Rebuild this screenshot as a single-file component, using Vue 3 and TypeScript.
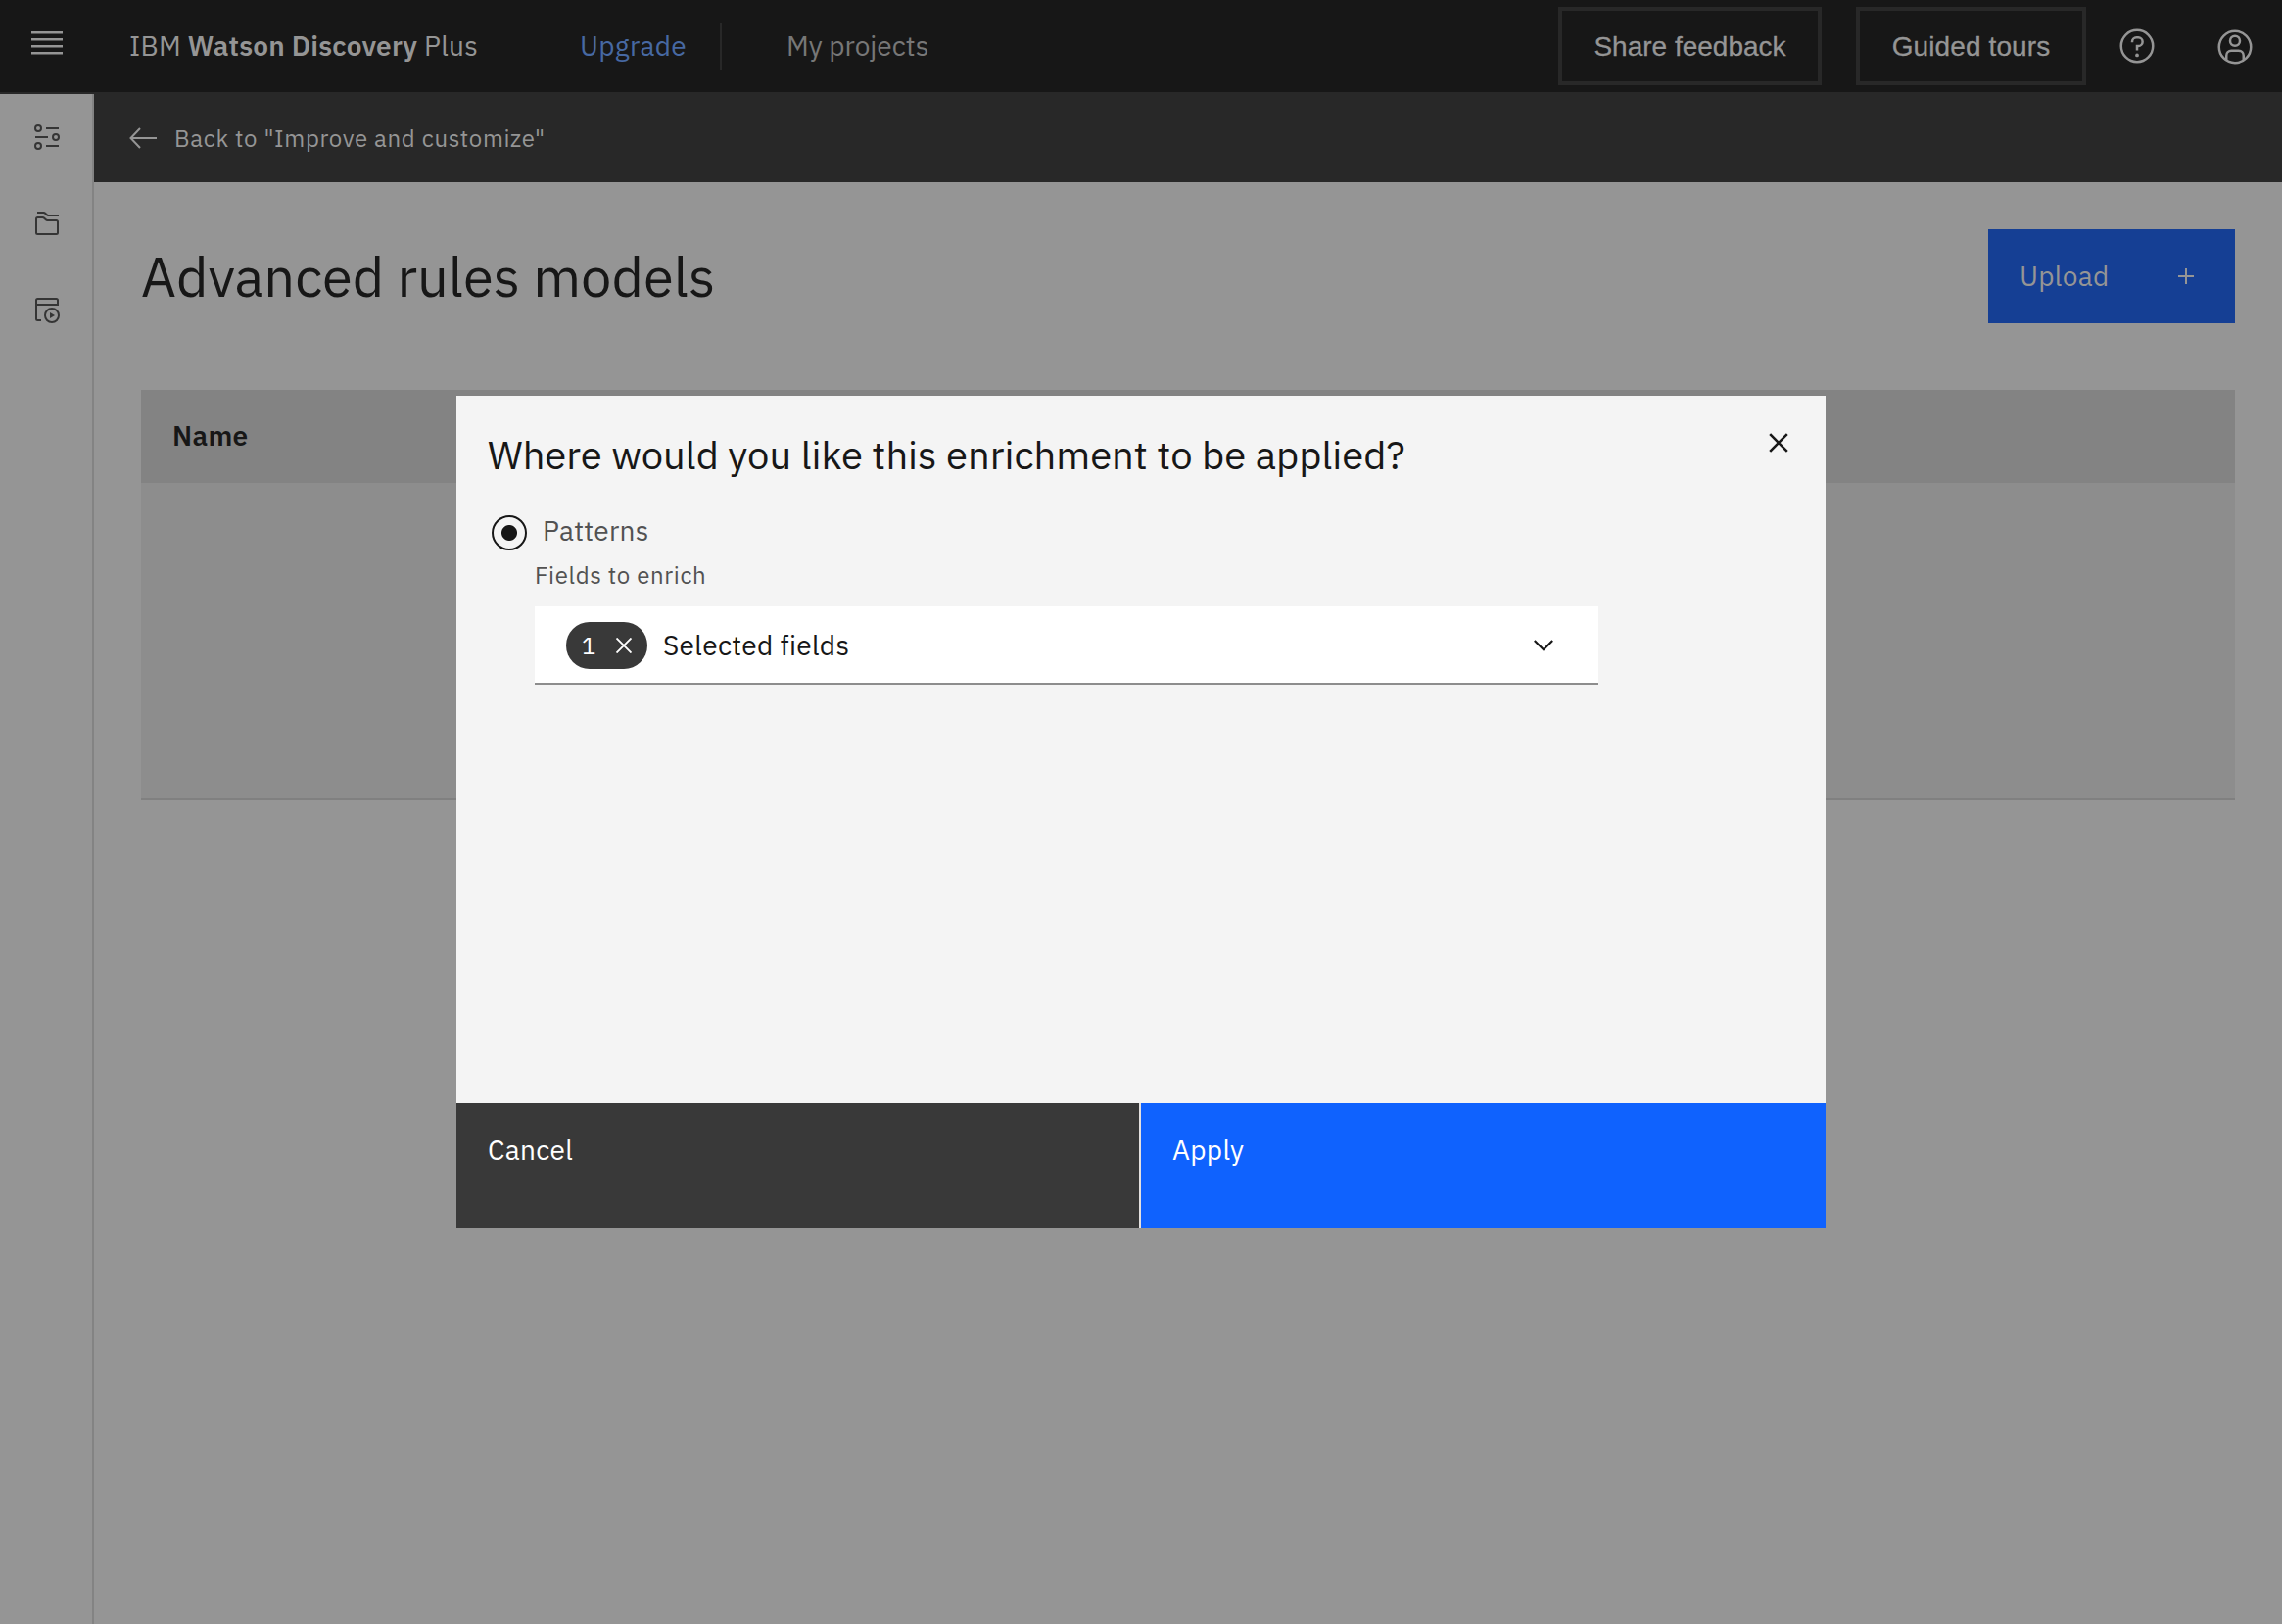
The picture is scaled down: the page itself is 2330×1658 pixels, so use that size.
<script setup lang="ts">
import { ref } from 'vue'

interface HeaderAction {
  label: string
  kind: string
}

const headerActions: HeaderAction[] = [
  { label: 'Share feedback', kind: 'feedback' },
  { label: 'Guided tours', kind: 'tours' },
]
const columns: string[] = ['Name']
const selectedCount = ref<number>(1)
const target = ref<string>('patterns')
</script>

<template>
  <div class="page">
    <header class="topbar">
      <button class="menu" aria-label="Menu">
        <svg width="32" height="26" viewBox="0 0 32 26" fill="currentColor">
          <path d="M0 0h32v2.500H0zM0 7h32v2.500H0zM0 14h32v2.500H0zM0 21h32v2.500H0z" />
        </svg>
      </button>
      <div class="brand">IBM <strong>Watson Discovery</strong> Plus</div>
      <a class="upgrade">Upgrade</a>
      <nav class="nav"><a>My projects</a></nav>
      <div class="actions">
        <button v-for="a in headerActions" :key="a.kind" class="outline" :class="a.kind">{{ a.label }}</button>
        <svg class="help" width="40" height="40" viewBox="0 0 32 32" fill="currentColor">
          <path d="M16 2a14 14 0 1 0 14 14A14 14 0 0 0 16 2zm0 26a12 12 0 1 1 12-12 12 12 0 0 1-12 12z" />
          <circle cx="16" cy="23.5" r="1.5" />
          <path d="M17 8h-1.500a4.490 4.490 0 0 0-4.500 4.500v.500h2v-.500a2.500 2.500 0 0 1 2.500-2.500H17a2.500 2.500 0 0 1 0 5h-2v4.500h2V17a4.500 4.500 0 0 0 0-9z" />
        </svg>
        <svg class="user" width="40" height="40" viewBox="0 0 32 32" fill="none" stroke="currentColor" stroke-width="2">
          <circle cx="16" cy="16" r="13" />
          <circle cx="16" cy="11" r="4" />
          <path d="M9 26.500V23a4 4 0 0 1 4-4h6a4 4 0 0 1 4 4v3.500" />
        </svg>
      </div>
    </header>

    <div class="body">
      <aside class="rail">
        <svg width="32" height="32" viewBox="0 0 32 32" fill="none" stroke="currentColor" stroke-width="2">
          <circle cx="7" cy="7" r="3" /><circle cx="25" cy="16" r="3" /><circle cx="7" cy="25" r="3" />
          <path d="M15 7h13M4 16h13M15 25h13" />
        </svg>
        <svg width="32" height="32" viewBox="0 0 32 32" fill="none" stroke="currentColor" stroke-width="2">
          <path d="M6 5h6.500q1 0 1.700.700l1.600 1.600q.700.700 1.700.700H28" />
          <path d="M5 11.500q0-1.500 1.500-1.500h5q1 0 1.700.700l1.600 1.600q.700.700 1.700.700h9q1.500 0 1.500 1.500V25.500q0 1.500-1.500 1.500h-19q-1.500 0-1.500-1.500z" />
        </svg>
        <svg width="32" height="32" viewBox="0 0 32 32" fill="none" stroke="currentColor" stroke-width="2">
          <path d="M10 27H6.500Q5 27 5 25.500V6.500Q5 5 6.500 5h19Q27 5 27 6.500V11H5" />
          <circle cx="21" cy="22" r="7" />
          <path d="M19 19l5 3-5 3z" fill="currentColor" stroke="none" />
        </svg>
      </aside>

      <main class="content">
        <a class="back">
          <svg width="28" height="22" viewBox="0 0 28 22" fill="none" stroke="currentColor" stroke-width="2">
            <path d="M11 1L1.500 11l9.500 10M1.500 11H28" />
          </svg>
          <span>Back to "Improve and customize"</span>
        </a>
        <div class="heading">
          <h1>Advanced rules models</h1>
          <button class="upload">
            <span>Upload</span>
            <svg width="16" height="16" viewBox="0 0 16 16" stroke="currentColor" stroke-width="2"><path d="M8 0v16M0 8h16" /></svg>
          </button>
        </div>
        <section class="table">
          <div class="thead"><span v-for="c in columns" :key="c">{{ c }}</span></div>
          <div class="tbody"></div>
        </section>
      </main>
    </div>

    <div class="overlay">
      <div class="modal" role="dialog">
        <div class="modal-head">
          <h2>Where would you like this enrichment to be applied?</h2>
          <svg class="close" width="20" height="20" viewBox="0 0 20 20" stroke="currentColor" stroke-width="2.600"><path d="M1.200 1.200l17.600 17.600M18.800 1.200L1.200 18.800" /></svg>
        </div>
        <div class="choice">
          <span class="radio" :class="{ on: target === 'patterns' }"></span>
          <span class="choice-label">Patterns</span>
        </div>
        <div class="field">
          <div class="field-label">Fields to enrich</div>
          <div class="select">
            <span class="tag">
              <span class="count">{{ selectedCount }}</span>
              <svg width="16" height="16" viewBox="0 0 16 16" stroke="currentColor" stroke-width="1.900"><path d="M.500.500l15 15M15.500.500l-15 15" /></svg>
            </span>
            <span class="value">Selected fields</span>
            <svg class="chevron" width="20" height="12" viewBox="0 0 20 12" fill="none" stroke="currentColor" stroke-width="2.200"><path d="M.800 1L10 10.200 19.200 1" /></svg>
          </div>
        </div>
        <div class="modal-foot">
          <button class="cancel">Cancel</button>
          <button class="apply">Apply</button>
        </div>
      </div>
    </div>
  </div>
</template>

<style>
body {
  background: #959595;
}
</style>

<style scoped>
* {
  box-sizing: border-box;
}
.page {
  position: relative;
  width: 2330px;
  height: 1658px;
  overflow: hidden;
  display: flex;
  flex-direction: column;
  background: #959595;
  color: #171717;
  font: 28px/36px 'IBM Plex Sans', Roboto, 'Noto Sans', sans-serif;
  letter-spacing: 0.32px;
  white-space: nowrap;
}
button {
  margin: 0;
  padding: 0;
  border: 0;
  background: none;
  color: inherit;
  font: inherit;
  letter-spacing: inherit;
}
svg {
  display: block;
  flex: none;
}
.topbar {
  height: 94px;
  flex: none;
  display: flex;
  align-items: center;
  background: #171717;
  color: #959595;
}
.menu {
  width: 96px;
  padding: 0 32px 4px;
}
.brand {
  width: 460px;
  padding-left: 36px;
  letter-spacing: 0.2px;
}
.brand strong {
  font-weight: 600;
}
.upgrade {
  width: 181px;
  height: 48px;
  padding-left: 36px;
  border-right: 2px solid #282828;
  line-height: 48px;
  color: #4769a3;
}
.nav {
  padding-left: 66px;
  color: #777777;
  letter-spacing: 0;
}
.actions {
  margin-left: auto;
  padding-right: 28px;
  display: flex;
  align-items: center;
}
.outline {
  height: 80px;
  padding-top: 1px;
  border: 4px solid #282828;
  font-family: 'Liberation Sans', Arial, sans-serif;
  letter-spacing: 0;
  -webkit-text-stroke: 0.3px currentColor;
}
.feedback {
  width: 269px;
  margin-right: 35px;
}
.tours {
  width: 235px;
  margin-right: 32px;
  letter-spacing: 0.1px;
}
.user {
  margin: 2px 0 0 60px;
}
.body {
  flex: 1;
  display: flex;
  background: #282828;
}
.rail {
  width: 96px;
  margin-top: 2px;
  padding-top: 28px;
  border-right: 2px solid #838383;
  background: #959595;
  display: flex;
  flex-direction: column;
  align-items: center;
  gap: 56px;
  color: #353535;
}
.rail svg {
  margin-left: 2px;
}
.content {
  flex: 1;
  background: #959595;
}
.back {
  height: 92px;
  padding: 2px 0 0 36px;
  display: flex;
  align-items: center;
  gap: 18px;
  background: #282828;
  color: #959595;
  font-size: 24px;
  letter-spacing: 0.64px;
}
.heading {
  margin: 48px 48px 0;
  height: 96px;
  display: flex;
  justify-content: space-between;
  align-items: center;
}
h1 {
  margin: 0;
  font-size: 56px;
  line-height: 64px;
  font-weight: 400;
  letter-spacing: 0;
}
.upload {
  width: 252px;
  height: 96px;
  padding: 0 42px 0 32px;
  display: flex;
  justify-content: space-between;
  align-items: center;
  background: #153f94;
  color: #959595;
}
.table {
  margin: 68px 48px 0;
}
.thead {
  height: 95px;
  padding: 0 0 2px 32px;
  display: flex;
  align-items: center;
  background: #838383;
  font-weight: 600;
}
.tbody {
  height: 324px;
  background: #8d8d8d;
  border-bottom: 2px solid #808080;
}
.overlay {
  position: absolute;
  inset: 0;
  display: grid;
  place-items: center;
}
.modal {
  width: 1398px;
  height: 850px;
  display: flex;
  flex-direction: column;
  background: #f4f4f4;
}
.modal-head {
  padding: 36px 38px 0 32px;
  display: flex;
  justify-content: space-between;
}
h2 {
  margin: 0;
  font-size: 40px;
  line-height: 48px;
  font-weight: 400;
  letter-spacing: 0;
}
.close {
  margin-top: 2px;
}
.choice {
  margin: 38px 0 0 36px;
  height: 36px;
  display: flex;
  gap: 16px;
  color: #525252;
}
.choice-label {
  line-height: 31px;
}
.radio {
  width: 36px;
  height: 36px;
  border: 2px solid #171717;
  border-radius: 50%;
}
.radio.on {
  background: radial-gradient(circle, #171717 7.500px, transparent 8.500px);
}
.field {
  margin: 10px 0 0 80px;
  width: 1086px;
}
.field-label {
  height: 47px;
  line-height: 30px;
  color: #525252;
  font-size: 24px;
  letter-spacing: 0.64px;
}
.select {
  height: 80px;
  padding: 2px 46px 0 32px;
  display: flex;
  align-items: center;
  background: #fff;
  border-bottom: 2px solid #8d8d8d;
}
.tag {
  width: 83px;
  height: 48px;
  padding: 0 16px;
  display: flex;
  align-items: center;
  justify-content: space-between;
  border-radius: 24px;
  background: #393939;
  color: #fff;
}
.count {
  font-size: 24px;
  line-height: 48px;
  letter-spacing: 0.64px;
}
.value {
  margin-left: 16px;
}
.chevron {
  margin-left: auto;
}
.modal-foot {
  margin-top: auto;
  height: 128px;
  display: flex;
  gap: 2px;
  background: #e3e0df;
  color: #fff;
}
.modal-foot button {
  height: 128px;
  padding: 30px 32px 0;
  display: flex;
  align-items: flex-start;
}
.modal-foot .cancel {
  width: 697px;
  background: #393939;
}
.modal-foot .apply {
  flex: 1;
  background: #0f62fe;
}
</style>
